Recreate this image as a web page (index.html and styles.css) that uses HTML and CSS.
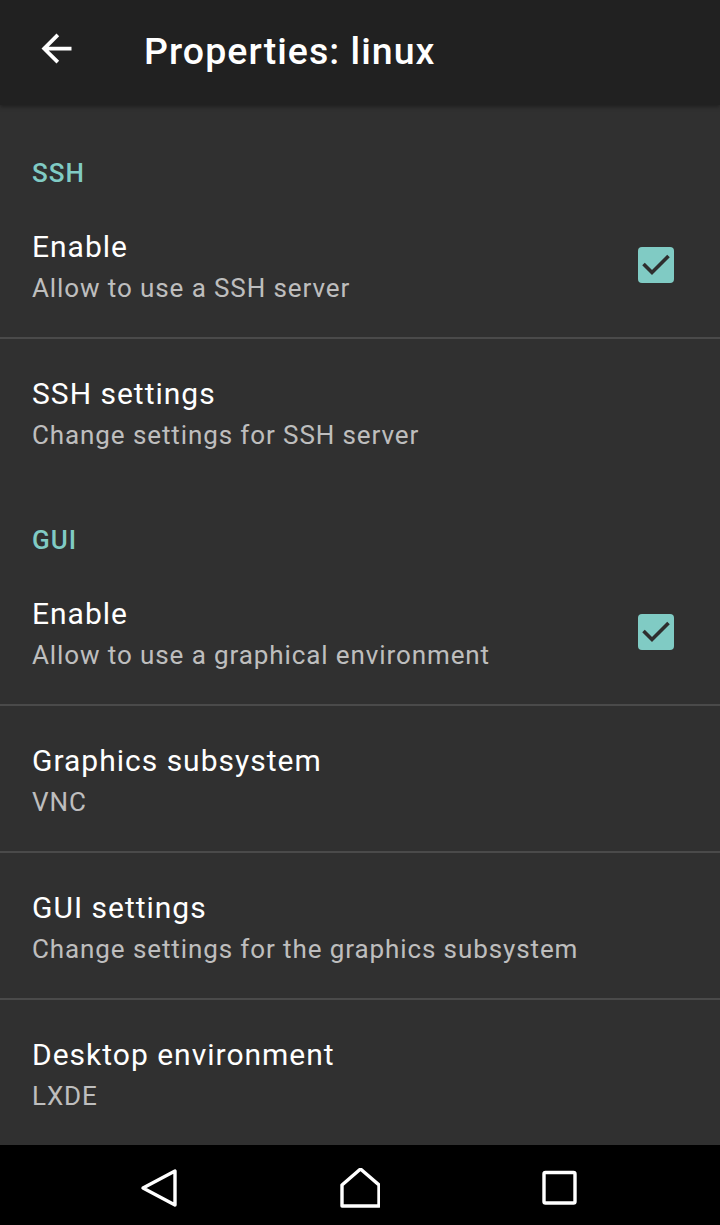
FILE: index.html
```html
<!DOCTYPE html>
<html lang="en">
<head>
<meta charset="utf-8">
<title>Properties: linux</title>
<link rel="stylesheet" href="styles.css">
</head>
<body>
<div class="screen">
  <header class="toolbar">
    <svg class="back-icon" viewBox="0 0 24 24" aria-hidden="true"><path d="M20 11H7.83l5.59-5.59L12 4l-8 8 8 8 1.41-1.41L7.83 13H20v-2z" fill="#fff"/></svg>
    <h1 class="toolbar-title">Properties: linux</h1>
  </header>

  <main class="list">
    <div class="category">SSH</div>
    <div class="pref">
      <div class="pref-text">
        <div class="pref-title">Enable</div>
        <div class="pref-summary">Allow to use a SSH server</div>
      </div>
      <div class="checkbox"><svg viewBox="0 0 36 36" aria-hidden="true"><path d="M5.5 17 L14 25.5 L30.5 9" fill="none" stroke="#2e2e2e" stroke-width="3.6"/></svg></div>
    </div>
    <div class="divider"></div>
    <div class="pref">
      <div class="pref-text">
        <div class="pref-title">SSH settings</div>
        <div class="pref-summary">Change settings for SSH server</div>
      </div>
    </div>

    <div class="category">GUI</div>
    <div class="pref">
      <div class="pref-text">
        <div class="pref-title">Enable</div>
        <div class="pref-summary">Allow to use a graphical environment</div>
      </div>
      <div class="checkbox"><svg viewBox="0 0 36 36" aria-hidden="true"><path d="M5.5 17 L14 25.5 L30.5 9" fill="none" stroke="#2e2e2e" stroke-width="3.6"/></svg></div>
    </div>
    <div class="divider"></div>
    <div class="pref">
      <div class="pref-text">
        <div class="pref-title">Graphics subsystem</div>
        <div class="pref-summary">VNC</div>
      </div>
    </div>
    <div class="divider"></div>
    <div class="pref">
      <div class="pref-text">
        <div class="pref-title">GUI settings</div>
        <div class="pref-summary">Change settings for the graphics subsystem</div>
      </div>
    </div>
    <div class="divider"></div>
    <div class="pref">
      <div class="pref-text">
        <div class="pref-title">Desktop environment</div>
        <div class="pref-summary">LXDE</div>
      </div>
    </div>
  </main>

  <nav class="navbar">
    <div class="nav-cell">
      <svg class="nav-icon" viewBox="0 0 40 40" aria-hidden="true"><path d="M3 20 L35 3 L35 37 Z" fill="none" stroke="#fff" stroke-width="3.4" stroke-linejoin="round"/></svg>
    </div>
    <div class="nav-cell">
      <svg class="nav-icon" viewBox="0 0 40 40" aria-hidden="true"><path d="M2 38 L2 17 L20.5 1 L39 17 L39 38 Z" fill="none" stroke="#fff" stroke-width="3.4" stroke-linejoin="round"/></svg>
    </div>
    <div class="nav-cell">
      <svg class="nav-icon" viewBox="0 0 40 40" aria-hidden="true"><rect x="4" y="4.5" width="31" height="30.5" rx="1.5" fill="none" stroke="#fff" stroke-width="3.4"/></svg>
    </div>
  </nav>
</div>
</body>
</html>
```

FILE: styles.css
```css
* {
  box-sizing: border-box;
}

html, body {
  margin: 0;
  padding: 0;
  background: #303030;
}

body {
  font-family: Roboto, "Liberation Sans", sans-serif;
  color: #fff;
}

.screen {
  width: 720px;
  height: 1225px;
  display: flex;
  flex-direction: column;
  overflow: hidden;
}

.toolbar {
  position: relative;
  z-index: 1;
  height: 105px;
  flex: 0 0 105px;
  background: #212121;
  display: flex;
  align-items: flex-start;
  box-shadow: 0 2px 4px rgba(0, 0, 0, 0.35);
}

.back-icon {
  width: 45px;
  height: 45px;
  margin: 26px 0 0 34px;
  flex: 0 0 45px;
}

.toolbar-title {
  margin: 29px 0 0 65px;
  font-size: 37.5px;
  line-height: 44px;
  font-weight: 500;
  color: #fff;
  letter-spacing: 1.05px;
}

.list {
  flex: 1 1 auto;
  min-height: 0;
  overflow: hidden;
  padding-top: 12px;
}

.category {
  height: 75px;
  padding: 41px 0 0 32px;
  font-size: 26px;
  line-height: 30px;
  font-weight: 500;
  color: #80cbc4;
  letter-spacing: 1px;
}

.pref {
  height: 145px;
  display: flex;
  padding: 0 46px 0 32px;
}

.pref-text {
  flex: 1 1 auto;
  padding-top: 35px;
}

.pref-title {
  font-size: 30px;
  line-height: 40px;
  color: #fff;
  letter-spacing: 1px;
}

.pref-summary {
  font-size: 26px;
  line-height: 42px;
  color: rgba(255, 255, 255, 0.7);
  letter-spacing: 0.9px;
}

.checkbox {
  align-self: center;
  width: 36px;
  height: 36px;
  border-radius: 4px;
  background: #80cbc4;
  flex: 0 0 36px;
}

.checkbox svg {
  display: block;
  width: 36px;
  height: 36px;
}

.divider {
  height: 2px;
  background: #4a4a4a;
}

.navbar {
  flex: 0 0 80px;
  height: 80px;
  padding-top: 6px;
  background: #000;
  display: flex;
  justify-content: center;
  align-items: center;
}

.nav-cell {
  width: 200px;
  display: flex;
  justify-content: center;
  align-items: center;
}

.nav-icon {
  width: 40px;
  height: 40px;
  display: block;
}
```
